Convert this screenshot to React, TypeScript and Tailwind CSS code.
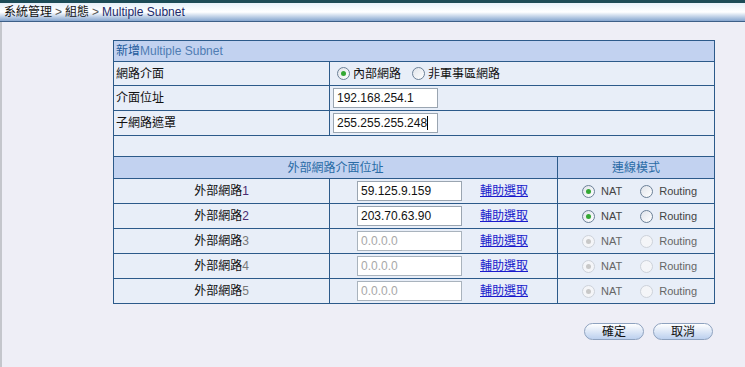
import React from "react";

const font = { fontFamily: '"Liberation Sans", Arial, "Noto Sans CJK TC", sans-serif' };

function Radio({ checked, disabled, className = "" }: { checked?: boolean; disabled?: boolean; className?: string }) {
  return (
    <span
      className={
        "flex items-center justify-center w-[13px] h-[13px] rounded-full border shrink-0 " +
        (disabled
          ? "border-[#cdd2da] bg-[#f4f5f8] "
          : "border-[#6b8097] bg-gradient-to-br from-[#dfe3ea] to-white ") +
        className
      }
    >
      {checked && (
        <span
          className={
            "w-[5px] h-[5px] rounded-full " +
            (disabled ? "bg-[#c8c8c8]" : "bg-[#34a834]")
          }
        />
      )}
    </span>
  );
}

function TextBox({ value, disabled, cursor }: { value: string; disabled?: boolean; cursor?: boolean }) {
  return (
    <div
      className={
        "w-[105px] h-[20px] border bg-white flex items-center pl-[3px] text-[12px] " +
        (disabled ? "border-[#a9b3bd] text-[#a8a8a8]" : "border-[#9aa5b1] text-[#111]")
      }
    >
      {value}
      {cursor && <span className="inline-block w-px h-[14px] bg-black" />}
    </div>
  );
}

const wanRows = [
  { n: 1, ip: "59.125.9.159", on: true },
  { n: 2, ip: "203.70.63.90", on: true },
  { n: 3, ip: "0.0.0.0", on: false },
  { n: 4, ip: "0.0.0.0", on: false },
  { n: 5, ip: "0.0.0.0", on: false },
];

const cell = "border border-[#2c5a8a] p-0";

export default function App() {
  return (
    <div className="w-[745px] h-[367px] bg-[#eeeef6] overflow-hidden relative" style={font}>
      {/* title bar */}
      <div className="h-[22px] flex flex-col">
        <div className="h-[3px] bg-[#1c4b57]" />
        <div className="flex-1 bg-gradient-to-b from-[#e6f0fa] via-white to-[#86a6cf] flex items-center pl-[4px] text-[12px] text-[#111]">
          系統管理 <span className="text-[#555] mx-[3px]">&gt;</span> 組態{" "}
          <span className="text-[#555] mx-[3px]">&gt;</span>
          <span className="text-[#1e2a6a]">Multiple Subnet</span>
        </div>
        <div className="h-px bg-[#3d5f88]" />
      </div>
      <div className="absolute left-0 top-[22px] bottom-0 w-[2px] bg-[#c4c6cc]" />

      <div className="pl-[113px] pt-[18px]">
        <table className="border-collapse table-fixed w-[601px] text-[12px] text-[#111]">
          <colgroup>
            <col className="w-[216px]" />
            <col className="w-[228px]" />
            <col className="w-[157px]" />
          </colgroup>
          <tbody>
            <tr className="h-[21px] bg-[#c2d2f0]">
              <td colSpan={3} className={cell + " pl-[2px]"}>
                <span className="text-[#1c5a9c]">新增</span>
                <span className="text-[#4f7db3]">Multiple Subnet</span>
              </td>
            </tr>
            <tr className="h-[24px] bg-[#e8eef8]">
              <td className={cell + " pl-[2px]"}>網路介面</td>
              <td colSpan={2} className={cell}>
                <div className="flex items-center pl-[7px]">
                  <Radio checked />
                  <span className="ml-[3px]">內部網路</span>
                  <Radio className="ml-[11px]" />
                  <span className="ml-[3px]">非軍事區網路</span>
                </div>
              </td>
            </tr>
            <tr className="h-[25px] bg-[#e8eef8]">
              <td className={cell + " pl-[2px]"}>介面位址</td>
              <td colSpan={2} className={cell + " pl-[3px]"}>
                <TextBox value="192.168.254.1" />
              </td>
            </tr>
            <tr className="h-[25px] bg-[#e8eef8]">
              <td className={cell + " pl-[2px]"}>子網路遮罩</td>
              <td colSpan={2} className={cell + " pl-[3px]"}>
                <TextBox value="255.255.255.248" cursor />
              </td>
            </tr>
            <tr className="h-[21px] bg-[#e8eef8]">
              <td colSpan={3} className={cell} />
            </tr>
            <tr className="h-[22px] bg-[#c2d2f0] text-[#2a6ca6] text-center">
              <td colSpan={2} className={cell}>外部網路介面位址</td>
              <td className={cell}>連線模式</td>
            </tr>
            {wanRows.map((r) => (
              <tr key={r.n} className="h-[25px] bg-[#e8eef8]">
                <td className={cell + " text-center"}>
                  外部網路<span className={r.on ? "text-[#4a2a70]" : "text-[#777]"}>{r.n}</span>
                </td>
                <td className={cell}>
                  <div className="flex items-center pl-[27px]">
                    <TextBox value={r.ip} disabled={!r.on} />
                    <a className="ml-[18px] text-[#1a1acc] underline cursor-pointer">輔助選取</a>
                  </div>
                </td>
                <td className={cell}>
                  <div
                    className={
                      "flex items-center pl-[24px] text-[11px] " +
                      (r.on ? "text-[#444]" : "text-[#666]")
                    }
                  >
                    <Radio checked disabled={!r.on} />
                    <span className="ml-[6px]">NAT</span>
                    <Radio className="ml-[18px]" disabled={!r.on} />
                    <span className="ml-[6px]">Routing</span>
                  </div>
                </td>
              </tr>
            ))}
          </tbody>
        </table>

        <div className="w-[601px] flex justify-end gap-[9px] mt-[19px] pr-px">
          {["確定", "取消"].map((t) => (
            <button
              key={t}
              className="w-[60px] h-[17px] rounded-full border border-[#8ea2bf] bg-gradient-to-b from-white to-[#bcd0ee] text-[12px] leading-none text-[#111]"
            >
              {t}
            </button>
          ))}
        </div>
      </div>
    </div>
  );
}
